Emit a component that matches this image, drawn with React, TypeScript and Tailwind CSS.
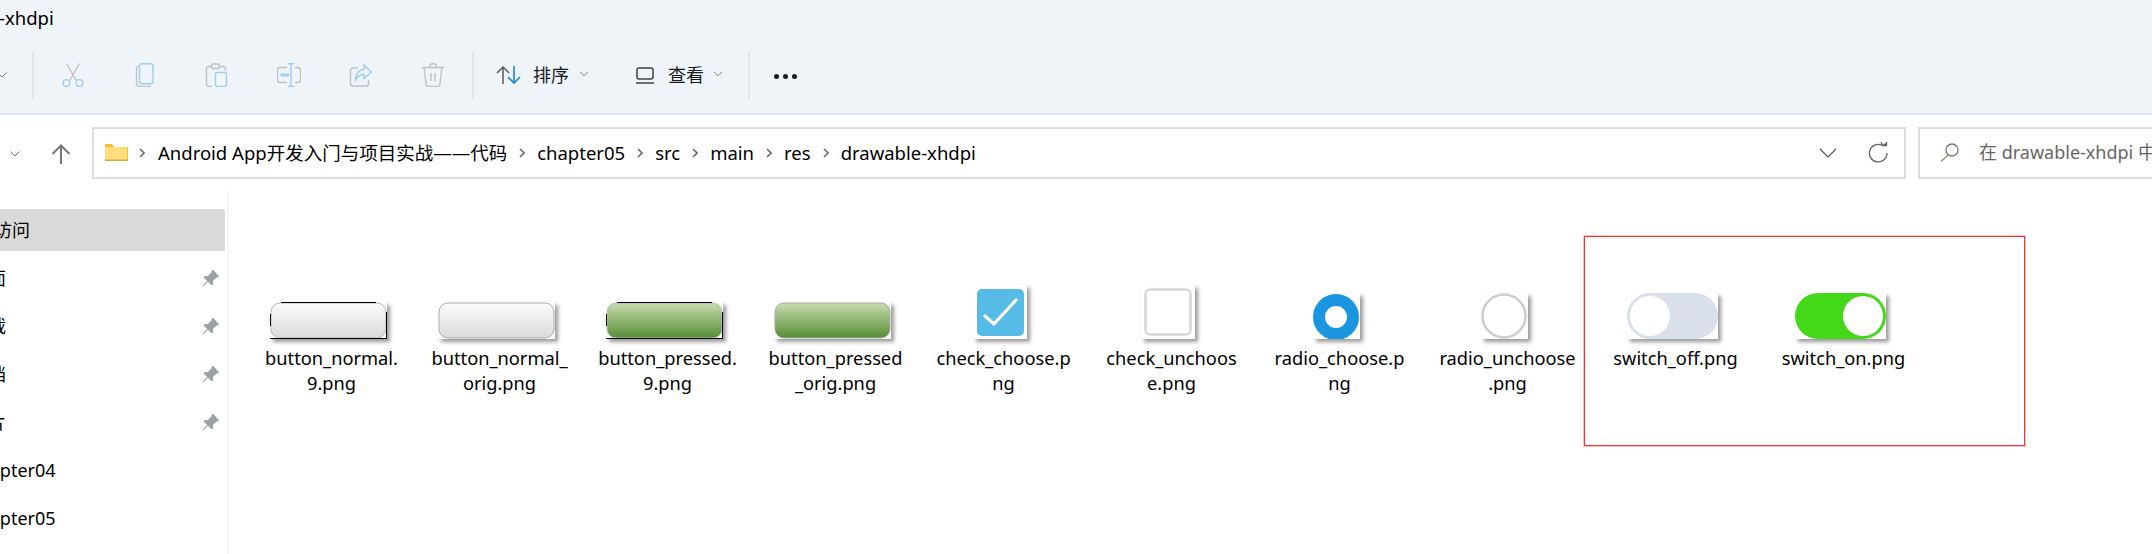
import { ReactNode } from 'react';
import { BsPinAngleFill } from 'react-icons/bs';

const FONT = "font-['Noto_Sans','Noto_Sans_CJK_SC',sans-serif]";

const Chevron = ({ className = '' }: { className?: string }) => (
    <svg width="10" height="6" viewBox="0 0 10 6" fill="none" stroke="#6f7478" strokeWidth="1" className={className}>
        <path d="M0.5 0.5 L5 5 L9.5 0.5" />
    </svg>
);

const Sep = () => <div className="w-[2px] h-[48px] bg-[#e1e6ea] shrink-0" />;

const Crumb = () => (
    <svg width="6" height="10" viewBox="0 0 6 10" fill="none" stroke="#6b6b6b" strokeWidth="1.6" className="shrink-0 mx-[12px]">
        <path d="M1 1 L5 5 L1 9" />
    </svg>
);

const BLUE = '#9fcdf2';
const GRAY = '#bfc1c3';

const ToolIcon = ({ children }: { children: ReactNode }) => (
    <div className="w-[72px] flex justify-center shrink-0">
        <svg width="24" height="24" viewBox="0 0 24 24" fill="none" strokeWidth="1.4">{children}</svg>
    </div>
);

const Toolbar = () => (
    <div className="h-[115px] bg-[#eff4f9] border-b-2 border-[#dfe5ea] shrink-0">
        <div className="h-[36px] flex items-center text-[18.5px] text-black -ml-[1px] whitespace-nowrap">-xhdpi</div>
        <div className="h-[48px] mt-[15px] flex items-center whitespace-nowrap">
            <Chevron className="ml-[-3px] mr-[25px]" />
            <Sep />
            <div className="w-[3px]" />
            <ToolIcon>
                <path d="M5.5 0.5 L15 17 M18.5 0.5 L9 17" stroke={GRAY} />
                <circle cx="5.5" cy="20" r="3.4" stroke={BLUE} />
                <circle cx="18.5" cy="20" r="3.4" stroke={BLUE} />
            </ToolIcon>
            <ToolIcon>
                <path d="M5.5 3 C4 3.5 3.5 4.5 3.5 6 V20 C3.5 22 4.5 23.5 7 23.5 H15 C16 23.5 17 23 17.5 22.5" stroke={GRAY} />
                <rect x="6.5" y="0.7" width="13.5" height="20" rx="2.5" stroke={BLUE} />
            </ToolIcon>
            <ToolIcon>
                <path d="M14 3.5 H18 C19.5 3.5 20.5 4.5 20.5 6 V8 M7 23.5 H4 C2.5 23.5 1.5 22.5 1.5 21 V6 C1.5 4.5 2.5 3.5 4 3.5 H6" stroke={GRAY} />
                <rect x="6.5" y="1" width="8" height="4.5" rx="1.5" stroke={GRAY} />
                <rect x="10.5" y="9.5" width="11" height="14" rx="2" stroke={BLUE} />
            </ToolIcon>
            <ToolIcon>
                <path d="M10 4.5 H3 C1.5 4.5 0.5 5.5 0.5 7 V17 C0.5 18.5 1.5 19.5 3 19.5 H10 M18 4.5 H21 C22.5 4.5 23.5 5.5 23.5 7 V17 C23.5 18.5 22.5 19.5 21 19.5 H18" stroke={GRAY} />
                <path d="M11 0.7 H17 M14 0.7 V23.3 M11 23.3 H17" stroke={BLUE} />
                <path d="M3.5 12 H12" stroke={BLUE} strokeWidth="3" />
            </ToolIcon>
            <ToolIcon>
                <path d="M9 5 H4 C2.5 5 1.5 6 1.5 7.5 V20.5 C1.5 22 2.5 23 4 23 H17 C18.5 23 19.5 22 19.5 20.5 V17" stroke={GRAY} />
                <path d="M15 2 L22.5 9 L15 15.5 V11.5 C11 11.5 8.5 13.5 6.5 17 C6.5 11.5 9.5 6.8 15 6.3 Z" stroke={BLUE} />
            </ToolIcon>
            <ToolIcon>
                <path d="M1 4.5 H23 M3.2 4.5 L5 21 C5.2 22.7 6 23.5 7.5 23.5 H16.5 C18 23.5 18.8 22.7 19 21 L20.8 4.5 M8.5 4.5 C8.5 2 9.5 0.7 12 0.7 C14.5 0.7 15.5 2 15.5 4.5 M10 10 V18 M14 10 V18" stroke={GRAY} />
            </ToolIcon>
            <div className="w-[3px]" />
            <Sep />
            <svg width="26" height="18" viewBox="0 0 26 18" fill="none" strokeWidth="1.6" className="ml-[22px] mr-[11px]">
                <path d="M7 18 V1 M1 7 L7 1 L13 7" stroke="#5f6264" />
                <path d="M18 0 V17 M12 11 L18 17 L24 11" stroke="#1a86d8" />
            </svg>
            <span className="text-[18px] text-[#1b1b1b] w-[37px]">排序</span>
            <Chevron className="ml-[9px] mr-[46px] mb-[2px] scale-90" />
            <svg width="20" height="17" viewBox="0 0 20 17" fill="none" stroke="#404040" strokeWidth="1.5" className="mr-[13px]">
                <rect x="2" y="1" width="16" height="11" rx="2" />
                <path d="M1 16 H19" />
            </svg>
            <span className="text-[18px] text-[#1b1b1b] w-[37px]">查看</span>
            <Chevron className="ml-[8px] mr-[25px] mb-[2px] scale-90" />
            <Sep />
            <div className="flex gap-[4px] ml-[24px] mt-[2px]">
                <div className="w-[5px] h-[5px] rounded-full bg-[#1c1c1c]" />
                <div className="w-[5px] h-[5px] rounded-full bg-[#1c1c1c]" />
                <div className="w-[5px] h-[5px] rounded-full bg-[#1c1c1c]" />
            </div>
        </div>
    </div>
);

const AddressRow = () => (
    <div className="h-[76px] flex items-center shrink-0 whitespace-nowrap pb-[1px]">
        <Chevron className="ml-[10px] mr-[31px] mb-[-2px] shrink-0" />
        <svg width="20" height="20" viewBox="0 0 20 20" fill="none" stroke="#777" strokeWidth="2" className="mr-[21px] mt-[3px] shrink-0">
            <path d="M10 20 V1.5 M1.5 10 L10 1.5 L18.5 10" />
        </svg>
        <div className="w-[1814px] h-[52px] shrink-0 border-2 border-[#dedede] flex items-center pl-[11px] pr-[16px] text-[18.5px] text-black">
            <svg width="23" height="17" viewBox="0 0 23 17" className="shrink-0 mr-[11px] -mt-[1px]">
                <path d="M0 0 H7 L9 3 H23 V17 H0 Z" fill="#f8bd2b" />
                <rect x="0" y="3" width="22" height="13" fill="#ffdc7c" />
                <rect x="0" y="15.5" width="22" height="1.5" fill="#e5a92a" />
            </svg>
            <svg width="6" height="10" viewBox="0 0 6 10" fill="none" stroke="#6b6b6b" strokeWidth="1.6" className="shrink-0 mr-[13px]">
                <path d="M1 1 L5 5 L1 9" />
            </svg>
            <span>Android App开发入门与项目实战——代码</span>
            <Crumb />
            <span>chapter05</span>
            <Crumb />
            <span>src</span>
            <Crumb />
            <span>main</span>
            <Crumb />
            <span>res</span>
            <Crumb />
            <span>drawable-xhdpi</span>
            <div className="flex-1" />
            <svg width="18" height="10" viewBox="0 0 18 10" fill="none" stroke="#555" strokeWidth="1.2" className="mr-[31px]">
                <path d="M1 1 L9 9 L17 1" />
            </svg>
            <svg width="20" height="22" viewBox="0 0 20 22" fill="none" stroke="#666" strokeWidth="1.3">
                <path d="M14 3.2 A8.8 8.8 0 1 0 19 11" />
                <path d="M13 0 L14.5 3.5 L18 1.5 M14.5 3.5 L18.5 3.5 L18.5 0" />
            </svg>
        </div>
        <div className="w-[260px] h-[52px] ml-[12px] border-2 border-[#dedede] flex items-center pl-[20px] text-[18px] text-[#666] shrink-0">
            <svg width="19" height="19" viewBox="0 0 19 19" fill="none" stroke="#777" strokeWidth="1.3" className="mr-[20px] shrink-0">
                <circle cx="12" cy="7" r="6" />
                <path d="M8 12 L1 18.5" stroke="#9a8a70" />
            </svg>
            <span>在 drawable-xhdpi 中搜索</span>
        </div>
    </div>
);

const pinned = ['桌面', '下载', '文档', '图片'];

const SideRow = ({ label, pin = false }: { label: string; pin?: boolean }) => (
    <div className="h-[48px] flex items-center pr-[5px]">
        <span className="-ml-[30px] flex-1 text-[18px] text-black whitespace-nowrap">{label}</span>
        {pin && <BsPinAngleFill size={19} color="#9aa2a6" />}
    </div>
);

const Sidebar = () => (
    <div className="w-[229px] shrink-0 border-r-2 border-[#f5f5f5] pr-[2px] pt-[18px]">
        <div className="h-[42px] mb-[3px] bg-[#d9d9d9] rounded-r-[2px] flex items-center overflow-hidden">
            <span className="-ml-[42px] text-[18px] text-black whitespace-nowrap">快速访问</span>
        </div>
        {pinned.map((label) => (
            <SideRow key={label} label={label} pin />
        ))}
        <SideRow label="chapter04" />
        <SideRow label="chapter05" />
    </div>
);

const THUMB = 'bg-white shadow-[3px_3px_4px_rgba(0,0,0,0.4)]';

const ButtonThumb = ({ id, top, bottom, stroke, patch }: { id: string; top: string; bottom: string; stroke: string; patch: boolean }) => (
    <svg width="117" height="37" viewBox="0 0 117 37" className={THUMB}>
        <defs>
            <linearGradient id={id} x1="0" y1="0" x2="0" y2="1">
                <stop offset="0" stopColor={top} />
                <stop offset="1" stopColor={bottom} />
            </linearGradient>
        </defs>
        <rect x="1" y="1" width="115" height="35" rx="9" fill={`url(#${id})`} stroke={stroke} />
        {patch && (
            <g fill="#000">
                <rect x="11" y="0" width="95" height="1" />
                <rect x="0" y="36" width="117" height="1" />
                <rect x="0" y="12" width="1" height="12" />
                <rect x="116" y="10" width="1" height="27" />
            </g>
        )}
    </svg>
);

const CheckThumb = ({ on }: { on: boolean }) => (
    <svg width="54" height="54" viewBox="0 0 54 54" className={THUMB}>
        {on ? (
            <>
                <rect x="4" y="4" width="47" height="47" rx="5" fill="#56bbe6" />
                <path d="M12 31 L21 39 L43 15" fill="none" stroke="#fff" strokeWidth="3.2" strokeLinecap="round" strokeLinejoin="round" />
            </>
        ) : (
            <rect x="4.5" y="4.5" width="45" height="45" rx="5" fill="#fff" stroke="#d6d6d6" strokeWidth="2.5" />
        )}
    </svg>
);

const RadioThumb = ({ on }: { on: boolean }) => (
    <svg width="47" height="46" viewBox="0 0 47 46" className={THUMB}>
        {on ? (
            <circle cx="23" cy="24" r="17" fill="#fff" stroke="#1a96e0" strokeWidth="12" />
        ) : (
            <circle cx="23" cy="23" r="21.5" fill="#fff" stroke="#cdcdcd" strokeWidth="2.5" />
        )}
    </svg>
);

const SwitchThumb = ({ on }: { on: boolean }) => (
    <svg width="91" height="46" viewBox="0 0 91 46" className={THUMB}>
        <rect x="0" y="0" width="91" height="46" rx="23" fill={on ? '#43d919' : '#d9e0ea'} />
        <circle cx={on ? 68 : 23} cy="23" r="20" fill="#fff" />
    </svg>
);

const files: { lines: string[]; thumb: ReactNode }[] = [
    { lines: ['button_normal.', '9.png'], thumb: <ButtonThumb id="b1" top="#fbfbfb" bottom="#dcdbd9" stroke="#b5b5b5" patch /> },
    { lines: ['button_normal_', 'orig.png'], thumb: <ButtonThumb id="b2" top="#fbfbfb" bottom="#dcdbd9" stroke="#a9a9a9" patch={false} /> },
    { lines: ['button_pressed.', '9.png'], thumb: <ButtonThumb id="b3" top="#c8dcae" bottom="#578d36" stroke="#b4bfa8" patch /> },
    { lines: ['button_pressed', '_orig.png'], thumb: <ButtonThumb id="b4" top="#c8dcae" bottom="#578d36" stroke="#a6ad9e" patch={false} /> },
    { lines: ['check_choose.p', 'ng'], thumb: <CheckThumb on /> },
    { lines: ['check_unchoos', 'e.png'], thumb: <CheckThumb on={false} /> },
    { lines: ['radio_choose.p', 'ng'], thumb: <RadioThumb on /> },
    { lines: ['radio_unchoose', '.png'], thumb: <RadioThumb on={false} /> },
    { lines: ['switch_off.png'], thumb: <SwitchThumb on={false} /> },
    { lines: ['switch_on.png'], thumb: <SwitchThumb on /> },
];

const FileCell = ({ lines, thumb }: { lines: string[]; thumb: ReactNode }) => (
    <div className="w-[168px] shrink-0 flex flex-col items-center">
        <div className="h-[148px] flex items-end">{thumb}</div>
        <div className="mt-[6px] pl-[7px] text-[18.25px] leading-[25px] text-black text-center whitespace-nowrap">
            {lines.map((line) => (
                <div key={line}>{line}</div>
            ))}
        </div>
    </div>
);

const App = () => (
    <div className={`relative w-[2152px] h-[554px] overflow-hidden bg-white flex flex-col ${FONT}`}>
        <Toolbar />
        <AddressRow />
        <div className="flex flex-1 min-h-0">
            <Sidebar />
            <div className="flex pl-[15px]">
                {files.map((file) => (
                    <FileCell key={file.lines[0]} lines={file.lines} thumb={file.thumb} />
                ))}
            </div>
        </div>
        {/* red annotation box drawn over the file list */}
        <div className="absolute left-[1584px] top-[236px] w-[441px] h-[210px] border border-[#f83030] shadow-[0_0_0_1px_rgba(250,60,60,0.3)]" />
    </div>
);

export default App;
